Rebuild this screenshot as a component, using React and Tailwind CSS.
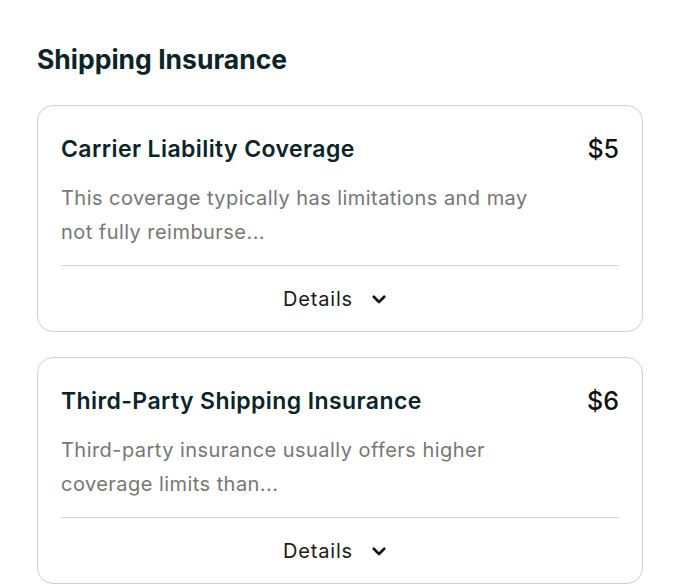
export default function App() {
  const cards = [
    {
      title: "Carrier Liability Coverage",
      price: "$5",
      l1: "This coverage typically has limitations and may",
      l2: "not fully reimburse...",
    },
    {
      title: "Third-Party Shipping Insurance",
      price: "$6",
      l1: "Third-party insurance usually offers higher",
      l2: "coverage limits than...",
    },
  ];
  return (
    <div className="w-[680px] h-[584px] bg-white px-[37px] pt-[41px] overflow-hidden" style={{ fontFamily: "Inter, 'Noto Sans', sans-serif" }}>
      <h2 className="text-[26.5px] leading-[36px] font-bold text-[#0b2427]">Shipping Insurance</h2>
      <div className="mt-[28px] flex flex-col gap-[25px]">
        {cards.map((c) => (
          <div key={c.title} className="w-[606px] rounded-[16px] border border-[#cfcfcf] px-[23px]">
            <div className="flex items-center justify-between pt-[27px]">
              <span className="text-[23px] leading-[32px] font-semibold text-[#0b2427] tracking-[0.4px]">{c.title}</span>
              <span className="text-[25px] leading-[32px] font-medium text-[#111]">{c.price}</span>
            </div>
            <p className="mt-[16px] text-[20px] leading-[34px] text-[#767676] tracking-[0.45px]">
              {c.l1}
              <br />
              {c.l2}
            </p>
            <div className="mt-[16px] border-t border-[#d4d4d4]" />
            <div className="flex items-center justify-center gap-[17px] h-[65px] pr-[9px]">
              <span className="text-[20px] text-[#1a1a1a] tracking-[0.8px]">Details</span>
              <svg width="18" height="18" viewBox="0 0 24 24" fill="none" stroke="#111" strokeWidth="3.5" strokeLinecap="round" strokeLinejoin="round">
                <path d="M5 9l7 7 7-7" />
              </svg>
            </div>
          </div>
        ))}
      </div>
    </div>
  );
}
